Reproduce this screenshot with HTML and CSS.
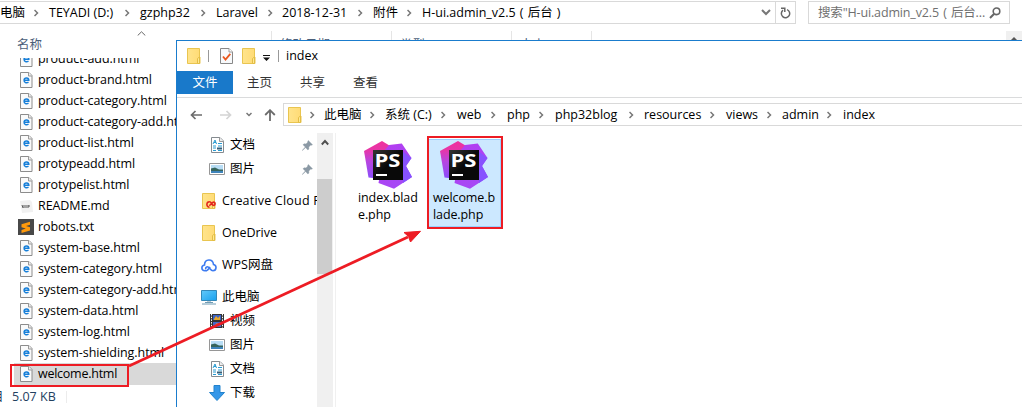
FILE: index.html
```html
<!DOCTYPE html>
<html lang="zh-CN">
<head>
<meta charset="utf-8">
<title>index</title>
<link rel="stylesheet" href="styles.css">
</head>
<body>
<svg class="defs" width="0" height="0">
  <defs>
    <linearGradient id="gold"><stop offset="0" stop-color="#ffe48c"/><stop offset="1" stop-color="#ffdb75"/></linearGradient>
    <linearGradient id="pink" x1="0.3" y1="0" x2="0.3" y2="1"><stop offset="0" stop-color="#f0309c"/><stop offset=".25" stop-color="#e636a8"/><stop offset=".55" stop-color="#b845e0"/><stop offset="1" stop-color="#8a4dfa"/></linearGradient>
    <linearGradient id="violet" x1="0.2" y1="0" x2="0.8" y2="1"><stop offset="0" stop-color="#b43df0"/><stop offset="1" stop-color="#a44bf6"/></linearGradient>
    <linearGradient id="screen" x1="0" y1="0" x2="1" y2="1"><stop offset="0" stop-color="#62c9fa"/><stop offset="1" stop-color="#18a0ee"/></linearGradient>
    <linearGradient id="black" x1="0" y1="0" x2="1" y2="1"><stop offset="0" stop-color="#353535"/><stop offset=".5" stop-color="#090909"/></linearGradient>
  </defs>
  <symbol id="html" viewBox="0 0 13 16"><path d="M.5.5h8.500l3 3v12H.5z" fill="#fafafa" stroke="#8c8c8c"/><path d="M8.500.5v3.500h3.500" fill="#eee" stroke="#999"/><path d="M4 8.200h4.800c0-3-4.500-3-4.700-.2-.2 2.900 2.500 3.400 4.400 2.200" fill="none" stroke="#167fd9" stroke-width="1.500"/></symbol>
  <symbol id="folder" viewBox="0 0 14 16"><path d="M.5.5h12v8.500h.5v6.500H.5z" fill="url(#gold)" stroke="#e9c550"/><path d="M10.500 15.500V10.500l2-1.500v6.500z" fill="#ffe993" stroke="#e3bd45"/></symbol>
  <symbol id="doc" viewBox="0 0 13 16"><path d="M.5.5h8.500l3.500 3.500v11.500H.5z" fill="#fff" stroke="#858b90"/><path d="M8.500.5v4h4" fill="#eee" stroke="#999"/><path d="M2 7l2-4 1.500 4M3 5.500h2M7 6.500h4M2 9h3M7 9h4M2 11h3M2 13.500h3M7 13.500h4" fill="none" stroke="#299bd2"/><path d="M6 10.500h5v2H6z" fill="#355e79"/></symbol>
  <symbol id="picture" viewBox="0 0 16 12"><path d="M.5.5h15v11H.5z" fill="#fff" stroke="#969696"/><path d="M2 2h12v8H2z" fill="#b8ddf5"/><path d="M2 5.500l4-1 4 2h4v2H2z" fill="#37655c"/><path d="M2 8h12v2H2z" fill="#3f84bb"/></symbol>
  <symbol id="pin" viewBox="0 0 11 11"><path d="M6.300.5l4.200 4.200-1.200.6-.6-.2-1.900 2 .1 2-1 .9-2.300-2.400L.4 10.600l-.1-.3 3-3.300L1 4.800l1-1 2 .1 1.900-1.800-.2-.7z" fill="#8b99a5" stroke="#8b99a5" stroke-width=".4"/></symbol>
  <symbol id="chev" viewBox="0 0 5 8"><path d="M.5 1l3 3-3 3" fill="none" stroke="#777" stroke-width="1.500"/></symbol>
  <symbol id="storm" viewBox="0 0 48 48"><path d="M0 10L18 0l9 5.500v9L9 37l-4.500-.5z" fill="url(#pink)"/><path d="M20 10l5-6 12.800-1.500L47.500 17 42 25l6 11-18 11.700-15.500-5.700z" fill="url(#violet)"/><path d="M38 10l9.500 7L42 25l6 11-9 6z" fill="#8752ff"/><path d="M9 9h30v30H9z" fill="url(#black)"/><text x="10.500" y="26" textLength="26" lengthAdjust="spacingAndGlyphs" class="ps">PS</text><path d="M12 33h11v2H12z" fill="#fff"/></symbol>
</svg>

<main class="desktop">
  <section class="back">
    <header class="back-bar">
      <div class="back-address">
        <span class="crumb c1">电脑</span><svg class="chev"><use href="#chev"/></svg>
        <span class="crumb c2">TEYADI (D:)</span><svg class="chev"><use href="#chev"/></svg>
        <span class="crumb c3">gzphp32</span><svg class="chev"><use href="#chev"/></svg>
        <span class="crumb c4">Laravel</span><svg class="chev"><use href="#chev"/></svg>
        <span class="crumb c5">2018-12-31</span><svg class="chev"><use href="#chev"/></svg>
        <span class="crumb c6">附件</span><svg class="chev"><use href="#chev"/></svg>
        <span class="crumb c7">H-ui.admin_v2.5<i class="paren">(</i>后台<i class="paren">)</i></span>
        <svg class="drop" width="10" height="7" viewBox="0 0 10 7"><path d="M1 1l4 4 4-4" fill="none" stroke="#777" stroke-width="2"/></svg>
        <span class="refresh"><svg width="11" height="12" viewBox="0 0 11 12"><path d="M7 2.600A4.200 4.200 0 1 1 3 3.200M1 1.200h3.800V5" fill="none" stroke="#666" stroke-width="1.500"/></svg></span>
      </div>
      <div class="search"><span class="query">搜索"H-ui.admin_v2.5<i class="paren">(</i>后台...</span><svg width="12" height="12" viewBox="0 0 12 12"><circle cx="7.500" cy="4.300" r="3.300" fill="none" stroke="#666" stroke-width="1.600"/><path d="M5.200 6.800L1 11" stroke="#666" stroke-width="2"/></svg></div>
    </header>
    <div class="columns">
      <svg class="sort" width="9" height="5" viewBox="0 0 9 5"><path d="M.7 4.500L4.500.8l3.800 3.700" fill="none" stroke="#666"/></svg>
      <span class="col name">名称</span><span class="col date">修改日期</span><span class="col type">类型</span><span class="col size">大小</span><span class="col rest"></span>
      <span class="back-up"><svg width="8" height="5" viewBox="0 0 8 5"><path d="M4 0l4 4H0z" fill="#555"/></svg></span>
    </div>
    <ul class="files">
      <li><svg class="page"><use href="#html"/></svg><span>product-add.html</span></li>
      <li><svg class="page"><use href="#html"/></svg><span>product-brand.html</span></li>
      <li><svg class="page"><use href="#html"/></svg><span>product-category.html</span></li>
      <li><svg class="page"><use href="#html"/></svg><span>product-category-add.html</span></li>
      <li><svg class="page"><use href="#html"/></svg><span>product-list.html</span></li>
      <li><svg class="page"><use href="#html"/></svg><span>protypeadd.html</span></li>
      <li><svg class="page"><use href="#html"/></svg><span>protypelist.html</span></li>
      <li><svg class="page" viewBox="0 0 13 16"><path d="M0 3l10-1 2 2 1 10-11 1z" fill="#f1f1f1"/><path d="M2 7l1 3M4 7v3M6 7v3M8 8h2M8 10V7" stroke="#555"/></svg><span>README.md</span></li>
      <li><svg class="sublime" width="16" height="16" viewBox="0 0 16 16"><path d="M0 0h16v16H0z" fill="#484848"/><path d="M3.500 5.200L12 2.700v3L8 7l4 1.300v3.300L3.500 14v-3l4.300-1.400-4.300-1.300z" fill="#ff9a0c"/></svg><span>robots.txt</span></li>
      <li><svg class="page"><use href="#html"/></svg><span>system-base.html</span></li>
      <li><svg class="page"><use href="#html"/></svg><span>system-category.html</span></li>
      <li><svg class="page"><use href="#html"/></svg><span>system-category-add.html</span></li>
      <li><svg class="page"><use href="#html"/></svg><span>system-data.html</span></li>
      <li><svg class="page"><use href="#html"/></svg><span>system-log.html</span></li>
      <li><svg class="page"><use href="#html"/></svg><span>system-shielding.html</span></li>
      <li class="selected"><svg class="page"><use href="#html"/></svg><span>welcome.html</span></li>
    </ul>
    <footer class="status"><span class="unit">目</span><span class="bytes">5.07 KB</span></footer>
  </section>

  <section class="front">
    <header class="title">
      <svg class="folder"><use href="#folder"/></svg><i class="sep"></i>
      <svg class="check" width="13" height="16" viewBox="0 0 13 16"><path d="M.5.5h8.500l3.500 3.500v11.500H.5z" fill="#f7f9fb" stroke="#888"/><path d="M9 .5v3.500h3.500" fill="#fff" stroke="#999"/><path d="M3 8.500l2.500 3 4.800-5.700" fill="none" stroke="#e9571e" stroke-width="1.800"/></svg>
      <svg class="folder f2"><use href="#folder"/></svg>
      <svg class="quick" width="7" height="6" viewBox="0 0 7 6"><path d="M0 0h7v1H0zM0 2.500h7L3.500 6z" fill="#111"/></svg><i class="sep s2"></i><span class="caption">index</span>
    </header>
    <nav class="tabs"><span class="file">文件</span><span>主页</span><span>共享</span><span>查看</span></nav>
    <div class="nav">
      <div class="arrows">
        <svg width="12" height="10" viewBox="0 0 12 10"><path d="M12 5H1.500M5.500 1l-4 4 4 4" fill="none" stroke="#6c6c6c" stroke-width="1.700"/></svg>
        <svg class="forward" width="12" height="10" viewBox="0 0 12 10"><path d="M0 5h10.500M6.500 1l4 4-4 4" fill="none" stroke="#d4d4d4" stroke-width="1.700"/></svg>
        <svg class="recent" width="6" height="5" viewBox="0 0 6 5"><path d="M.5 1L3 3.500 5.500 1" fill="none" stroke="#777" stroke-width="1.500"/></svg>
        <svg class="up" width="12" height="12" viewBox="0 0 12 12"><path d="M6 12V1.500M1.200 6L6 1.200 10.800 6" fill="none" stroke="#6c6c6c" stroke-width="1.800"/></svg>
      </div>
      <div class="address">
        <svg class="folder"><use href="#folder"/></svg><svg class="chev first"><use href="#chev"/></svg>
        <span class="crumb d1">此电脑</span><svg class="chev"><use href="#chev"/></svg>
        <span class="crumb d2">系统 (C:)</span><svg class="chev"><use href="#chev"/></svg>
        <span class="crumb d3">web</span><svg class="chev"><use href="#chev"/></svg>
        <span class="crumb d4">php</span><svg class="chev"><use href="#chev"/></svg>
        <span class="crumb d5">php32blog</span><svg class="chev"><use href="#chev"/></svg>
        <span class="crumb d6">resources</span><svg class="chev"><use href="#chev"/></svg>
        <span class="crumb d7">views</span><svg class="chev"><use href="#chev"/></svg>
        <span class="crumb d8">admin</span><svg class="chev"><use href="#chev"/></svg>
        <span class="crumb d9">index</span>
      </div>
    </div>
    <div class="body">
      <aside class="tree">
        <div class="node sub"><span class="ico"><svg class="doc"><use href="#doc"/></svg></span><span>文档</span><svg class="pin"><use href="#pin"/></svg></div>
        <div class="node sub"><span class="ico"><svg class="pic"><use href="#picture"/></svg></span><span>图片</span><svg class="pin"><use href="#pin"/></svg></div>
        <div class="node root"><span class="ico"><svg class="folder" viewBox="0 0 14 16"><use href="#folder" width="14" height="16"/><path d="M7.500 14.200a2.700 2.700 0 1 1 .2-5.400c1.500 0 2.300 3.600 4 3.600a1.600 1.600 0 1 0-.6-3.200c-1.400.4-2 3.400-4 3" fill="none" stroke="#e3261e" stroke-width="1.600"/></svg></span><span class="cloud">Creative Cloud Files</span></div>
        <div class="node root"><span class="ico"><svg class="folder"><use href="#folder"/></svg></span><span>OneDrive</span></div>
        <div class="node root"><span class="ico"><svg width="16" height="13" viewBox="0 0 16 13"><path d="M6 11.500c1.500-1 2.200-2.600 3.200-3.500M6 11.700H4C-.2 11.700 0 6.500 3.500 6c.2-6.500 8.300-6.500 9-.5 3.500.7 3.300 6.200-.6 6.200-2.600 0-3.200-4-5.600-4-1.600 0-2 1.800-1.200 2.600" fill="none" stroke="#3d7bf0" stroke-width="1.600"/></svg></span><span>WPS网盘</span></div>
        <div class="node root"><span class="ico"><svg width="16" height="15" viewBox="0 0 16 15"><path d="M.5.5h15v10H.5z" fill="url(#screen)" stroke="#3388b9"/><path d="M6 11h4v2H6z" fill="#b9cbd5"/><path d="M1 14h14M4 12.500h8" stroke="#719cb4"/></svg></span><span>此电脑</span></div>
        <div class="node sub"><span class="ico"><svg width="14" height="14" viewBox="0 0 14 14"><path d="M0 0h14v14H0z" fill="#343434"/><path d="M1.500 0v14M12.500 0v14" stroke="#fff" stroke-dasharray="1.500 1.200"/><path d="M3 1h8v5H3z" fill="#3a63c8"/><path d="M3 8h8v5H3z" fill="#4768c8"/><path d="M4 5l2-3 2 2 2-2v4H4zM4 12l3-3 3 3z" fill="#e6a62b"/></svg></span><span>视频</span></div>
        <div class="node sub"><span class="ico"><svg class="pic"><use href="#picture"/></svg></span><span>图片</span></div>
        <div class="node sub"><span class="ico"><svg class="doc"><use href="#doc"/></svg></span><span>文档</span></div>
        <div class="node sub"><span class="ico"><svg width="16" height="16" viewBox="0 0 16 16"><path d="M5 .5h6v7h4.500L8 15.500.5 7.500H5z" fill="#3597e8" stroke="#2383cd"/></svg></span><span>下载</span></div>
      </aside>
      <div class="scroll"><svg width="8" height="7" viewBox="0 0 8 7"><path d="M.8 5.500L4 2l3.200 3.500" fill="none" stroke="#505050" stroke-width="1.900"/></svg><div class="thumb"></div></div>
      <div class="grid">
        <div class="tile"><svg class="storm"><use href="#storm"/></svg><span>index.blad<br>e.php</span></div>
        <div class="tile picked"><svg class="storm"><use href="#storm"/></svg><span>welcome.b<br>lade.php</span></div>
      </div>
    </div>
  </section>

  <svg class="marks" width="1022" height="407" viewBox="0 0 1022 407">
    <path d="M11 365h117v21H11zM428 137h74v91h-74z" fill="none" stroke="#ed1c24" stroke-width="2"/>
    <path d="M129 366L408 237" stroke="#ed1c24" stroke-width="2.800"/><path d="M420.500 231.300L410.500 242l-2-5.500-4.500-4z" fill="#ed1c24" stroke="#ed1c24"/>
  </svg>
</main>
</body>
</html>
```
FILE: styles.css
```css
* { box-sizing: border-box; }
body { margin: 0; overflow: hidden; background: #fff; color: #000; font: 12.5px/20px "Open Sans", "Noto Sans CJK SC", sans-serif; }
svg { display: block; flex: none; }
.defs { position: absolute; }
.desktop { position: relative; width: 1022px; height: 407px; overflow: hidden; }
span { white-space: nowrap; }
.paren { font-style: normal; display: inline-block; width: 12px; text-align: center; }
.chev { width: 5px; height: 8px; }
.folder { width: 14px; height: 16px; }
.crumb { flex: none; }

.back { height: 407px; display: flex; flex-direction: column; }
.back-bar { display: flex; height: 24px; padding-top: 1px; }
.back-address { display: flex; align-items: center; width: 796px; height: 23px; border: 1px solid #d9d9d9; border-left: 0; }
.c1 { width: 34px; }
.c2 { width: 76px; margin-left: 10px; }
.c3 { width: 61px; margin-left: 10px; }
.c4 { width: 52px; margin-left: 10px; }
.c5 { width: 76px; margin-left: 9px; }
.c6 { width: 34px; margin-left: 10px; }
.c7 { width: 150px; margin-left: 10px; }
.drop { margin-left: auto; margin-right: 4px; }
.refresh { width: 20px; height: 21px; display: flex; align-items: center; justify-content: center; border-left: 1px solid #d9d9d9; }
.search { display: flex; align-items: center; width: 202px; height: 23px; margin-left: 12px; padding: 0 8px 0 9px; border: 1px solid #d9d9d9; color: #707070; justify-content: space-between; }
.query { letter-spacing: -.15px; }

.columns { position: relative; display: flex; height: 34px; padding-top: 7px; }
.sort { position: absolute; left: 137px; top: 7px; }
.col { height: 26px; padding-left: 8px; line-height: 28px; color: #4c607a; border-left: 1px solid #e5e5e5; }
.name { width: 271px; padding-left: 17px; border: 0; }
.date, .type { width: 120px; }
.size { width: 80px; }
.rest { width: 415px; }
.back-up { width: 16px; padding: 6px 4px; background: #f0f0f0; }

.files { width: 176px; height: 327px; margin: 0; padding: 0; overflow: hidden; list-style: none; letter-spacing: -.07px; }
.files li { display: flex; align-items: center; height: 21px; margin-left: 14px; padding-left: 6px; }
.files li:first-child { margin-top: -10px; }
.page { width: 13px; height: 16px; margin-right: 5px; }
.sublime { margin: 0 4px 0 -2px; }
.files .selected { height: 22px; padding-bottom: 1px; background: #d9d9d9; letter-spacing: -.25px; }
.status { display: flex; height: 22px; line-height: 23px; color: #23405f; }
.unit { width: 12px; text-indent: -9px; }
.bytes { width: 55px; height: 12px; margin-top: 6px; line-height: 12px; border-right: 1px solid #ececec; }

.front { position: absolute; left: 176px; top: 40px; width: 850px; height: 370px; background: #fff; border: 1px solid #1a7ccd; }
.title { display: flex; align-items: center; height: 30px; padding-left: 10px; }
.sep { width: 1px; height: 12px; margin: 0 11px 0 7px; background: #999; }
.f2 { margin-left: 9px; }
.quick { margin: 3px 0 0 7px; }
.s2 { margin: 0 7px 0 8px; }
.tabs { display: flex; height: 27px; border-bottom: 1px solid #dadbdc; color: #333; }
.tabs span { width: 53px; height: 23px; line-height: 23px; text-align: center; }
.tabs .file { width: 56px; background: #1979ca; color: #fff; }
.nav { display: flex; height: 28px; padding-top: 5px; }
.arrows { display: flex; flex: none; align-items: center; width: 106px; height: 23px; padding-left: 13px; }
.forward { margin-left: 18px; }
.recent { margin-left: 14px; }
.up { margin-left: 12px; }
.address { display: flex; align-items: center; flex: none; width: 760px; height: 23px; padding-left: 4px; border: 1px solid #d9d9d9; }
.first { margin-left: 8px; }
.d1 { width: 46px; margin-left: 9px; }
.d2 { width: 56px; margin-left: 10px; }
.d3 { width: 34px; margin-left: 11px; }
.d4 { width: 32px; margin-left: 11px; }
.d5 { width: 74px; margin-left: 11px; }
.d6 { width: 66px; margin-left: 10px; }
.d7 { width: 41px; margin-left: 11px; }
.d8 { width: 45px; margin-left: 10px; }
.d9 { margin-left: 11px; }

.body { display: flex; height: 281px; padding-top: 7px; }
.tree { width: 140px; height: 274px; overflow: hidden; }
.node { display: flex; align-items: center; height: 24px; }
.sub { padding-left: 32px; }
.root { height: 32px; padding-left: 24px; }
.root + .sub { margin-top: -4px; }
.sub + .root { margin-top: 4px; }
.ico { flex: none; width: 16px; margin-right: 5px; display: flex; justify-content: center; }
.cloud { flex: none; letter-spacing: .2px; }
.doc { width: 13px; height: 16px; }
.pic { width: 16px; height: 12px; }
.pin { width: 11px; height: 11px; margin-left: auto; margin-right: 4px; }
.scroll { width: 16px; padding: 6px 0 0; background: #f0f0f0; }
.scroll svg { margin: 0 auto 33px; }
.thumb { width: 15px; height: 95px; background: #cdcdcd; }
.grid { display: flex; margin-left: 2px; padding: 4px 0 0 16px; border-left: 1px solid #f0f0f0; }
.tile { width: 74px; height: 91px; padding: 4px 0 0 6px; line-height: 17px; letter-spacing: -.1px; }
.tile .storm { width: 48px; height: 48px; margin: 0 6px; }
.tile span { display: block; }
.picked { width: 73px; height: 88px; margin: 2px 0 0 2px; padding: 1px 0 0 4px; background: #cce8ff; border: 1px solid #99d1ff; }
.picked .storm { margin-left: 7px; }
.ps { font: bold 18px "Open Sans", sans-serif; letter-spacing: 0; fill: #fff; }
.marks { position: absolute; left: 0; top: 0; }
```
